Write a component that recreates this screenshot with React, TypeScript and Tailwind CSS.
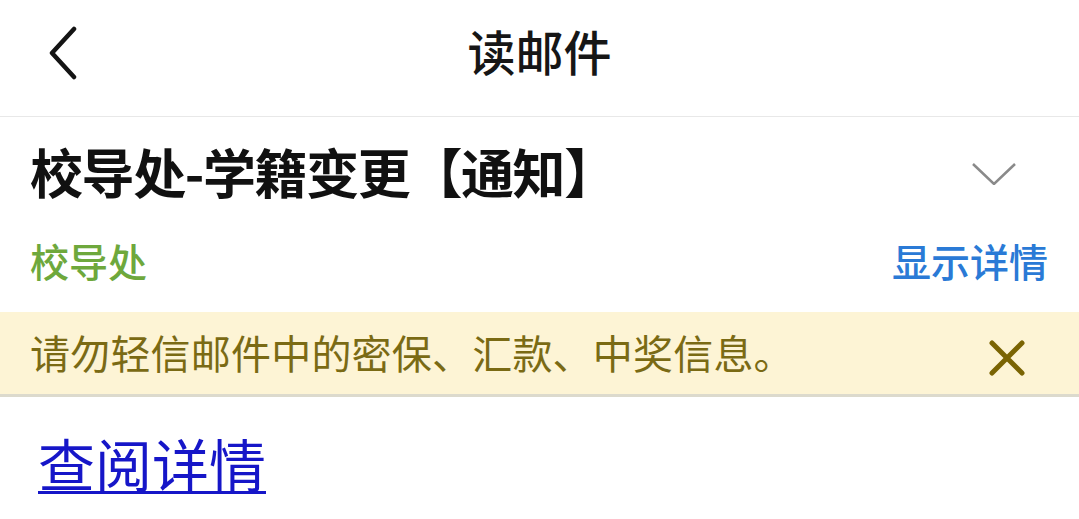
const font = "font-['Noto_Sans_CJK_SC','Noto_Sans',sans-serif]";

const BackIcon = () => (
  <svg width="32" height="54" viewBox="0 0 32 54" fill="none">
    <path
      d="M28 3 L6 27 L28 51"
      stroke="#141414"
      strokeWidth="4.5"
      strokeLinecap="round"
      strokeLinejoin="round"
    />
  </svg>
);

const ChevronDown = () => (
  <svg width="44" height="22" viewBox="0 0 44 22" fill="none">
    <path d="M1 1 L22 21 L43 1" stroke="#8a8a8a" strokeWidth="2.5" />
  </svg>
);

const CloseIcon = () => (
  <svg width="36" height="36" viewBox="0 0 36 36" fill="none">
    <path
      d="M3 3 L33 33 M33 3 L3 33"
      stroke="#7a6403"
      strokeWidth="5"
      strokeLinecap="round"
    />
  </svg>
);

export default function App() {
  return (
    <div className={`w-[1079px] h-[519px] bg-white overflow-hidden flex flex-col ${font}`}>
      {/* Top bar */}
      <div className="relative h-[117px] shrink-0 flex items-center justify-center pb-[16px] border-b border-[#e8e8e8]">
        <div className="absolute left-[46px] top-[26px]">
          <BackIcon />
        </div>
        <h1 className="text-[48px] leading-none font-medium text-[#161616]">读邮件</h1>
      </div>

      {/* Subject */}
      <div className="h-[113px] shrink-0 flex items-center justify-between pl-[30px] pr-[63px]">
        <h2 className="text-[53px] leading-none font-bold text-[#111] tracking-[-1.4px] mb-[4px]">
          校导处-学籍变更【通知】
        </h2>
        <ChevronDown />
      </div>

      {/* Sender row */}
      <div className="h-[82px] shrink-0 flex items-center justify-between pl-[30px] pr-[31px] pb-[21px]">
        <span className="text-[39px] leading-none font-medium text-[#6ea83c]">校导处</span>
        <span className="text-[39px] leading-none font-medium text-[#2a7ad6]">显示详情</span>
      </div>

      {/* Warning banner */}
      <div className="h-[85px] shrink-0 flex items-center justify-between bg-[#fdf4d5] border-b-[3px] border-[#dcdacd] pl-[30px] pr-[54px]">
        <p className="text-[40px] leading-none text-[#7a6a14] tracking-[0.2px] mb-[3px]">
          请勿轻信邮件中的密保、汇款、中奖信息。
        </p>
        <div className="mt-[10px]">
          <CloseIcon />
        </div>
      </div>

      {/* Body */}
      <div className="pl-[38px] pt-[37px]">
        <a href="#" className="text-[57px] leading-none text-[#1616c8] underline underline-offset-[4px] decoration-[3px]">
          查阅详情
        </a>
      </div>
    </div>
  );
}
